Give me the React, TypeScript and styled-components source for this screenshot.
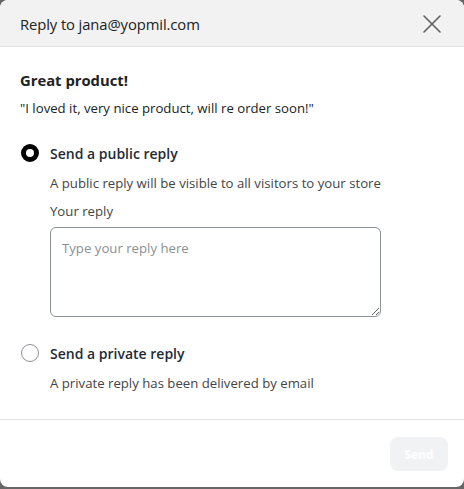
import React from "react";
import styled, { createGlobalStyle } from "styled-components";

const Global = createGlobalStyle`
  html, body { margin: 0; padding: 0; }
  body {
    background: #666666;
    font-family: "Open Sans", "Noto Sans", sans-serif;
    width: 464px;
    height: 489px;
    overflow: hidden;
  }
  * { box-sizing: border-box; }
`;

const Modal = styled.div`
  width: 464px;
  height: 487px;
  background: #ffffff;
  border-radius: 8px;
  overflow: hidden;
  display: flex;
  flex-direction: column;
`;

const Header = styled.div`
  height: 47px;
  background: #f2f2f2;
  border-bottom: 1px solid #e1e3e5;
  display: flex;
  align-items: center;
  justify-content: space-between;
  padding: 1px 20px 0 20px;
`;

const Title = styled.div`
  font-size: 14.8px;
  color: #202223;
  letter-spacing: -0.1px;
`;

const CloseButton = styled.button`
  border: none;
  background: transparent;
  padding: 0;
  width: 24px;
  height: 24px;
  display: flex;
  align-items: center;
  justify-content: center;
  cursor: pointer;
`;

const Body = styled.div`
  padding: 23px 20px 0 20px;
  flex: 1;
  display: flex;
  flex-direction: column;
`;

const ReviewTitle = styled.div`
  font-size: 14.8px;
  font-weight: 700;
  color: #202223;
  line-height: 20px;
`;

const Quote = styled.div`
  margin-top: 9px;
  font-size: 13.2px;
  color: #202223;
  line-height: 18px;
`;

const Option = styled.div<{ $top: number }>`
  margin-top: ${(p) => p.$top}px;
  display: flex;
  flex-direction: column;
`;

const OptionRow = styled.label`
  display: flex;
  align-items: center;
  gap: 11px;
  height: 20px;
`;

const Radio = styled.span<{ $checked?: boolean }>`
  width: 18px;
  height: 18px;
  margin-left: 1px;
  border-radius: 50%;
  border: ${(p) => (p.$checked ? "5px solid #000" : "1px solid #8c9196")};
  background: #fff;
  flex-shrink: 0;
`;

const OptionLabel = styled.span`
  font-size: 14px;
  font-weight: 600;
  color: #1d2b36;
`;

const Indented = styled.div`
  padding-left: 30px;
  display: flex;
  flex-direction: column;
`;

const HelpText = styled.div`
  margin-top: 11px;
  font-size: 13.2px;
  color: #444;
  line-height: 18px;
`;

const FieldLabel = styled.div`
  margin-top: 10px;
  font-size: 13.2px;
  color: #444;
  line-height: 18px;
`;

const TextArea = styled.textarea`
  margin-top: 7px;
  width: 331px;
  height: 90px;
  border: 1px solid #8c9196;
  border-radius: 6px;
  padding: 11px 11px;
  font-family: inherit;
  font-size: 13.2px;
  color: #202223;
  resize: vertical;
  outline: none;
  &::placeholder {
    color: #8c9196;
  }
`;

const Footer = styled.div`
  border-top: 1px solid #e1e3e5;
  height: 68px;
  display: flex;
  align-items: center;
  justify-content: flex-end;
  padding: 0 16px 0 0;
`;

const SendButton = styled.button`
  width: 58px;
  height: 34px;
  border: none;
  border-radius: 8px;
  background: #f1f2f4;
  color: #ffffff;
  font-family: inherit;
  font-weight: 700;
  font-size: 12px;
  margin-top: 1px;
`;

export default function App() {
  return (
    <>
      <Global />
      <Modal>
        <Header>
          <Title>Reply to jana@yopmil.com</Title>
          <CloseButton aria-label="Close">
            <svg width="20" height="20" viewBox="0 0 20 20">
              <path d="M2 2 L18 18 M18 2 L2 18" stroke="#5c5f62" strokeWidth="1.6" strokeLinecap="round" />
            </svg>
          </CloseButton>
        </Header>
        <Body>
          <ReviewTitle>Great product!</ReviewTitle>
          <Quote>"I loved it, very nice product, will re order soon!"</Quote>
          <Option $top={26}>
            <OptionRow>
              <Radio $checked />
              <OptionLabel>Send a public reply</OptionLabel>
            </OptionRow>
            <Indented>
              <HelpText>A public reply will be visible to all visitors to your store</HelpText>
              <FieldLabel>Your reply</FieldLabel>
              <TextArea placeholder="Type your reply here" />
            </Indented>
          </Option>
          <Option $top={26}>
            <OptionRow>
              <Radio />
              <OptionLabel>Send a private reply</OptionLabel>
            </OptionRow>
            <Indented>
              <HelpText>A private reply has been delivered by email</HelpText>
            </Indented>
          </Option>
        </Body>
        <Footer>
          <SendButton disabled>Send</SendButton>
        </Footer>
      </Modal>
    </>
  );
}
